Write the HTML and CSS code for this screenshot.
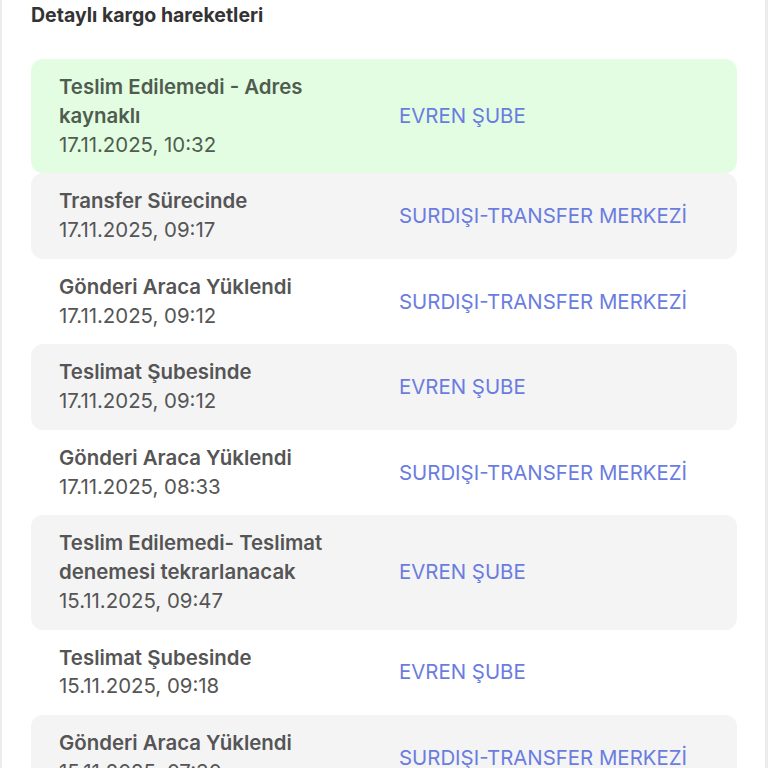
FILE: index.html
```html
<!DOCTYPE html>
<html lang="tr">
<head>
<meta charset="utf-8">
<link rel="stylesheet" href="styles.css">
</head>
<body>
<div class="screen">
  <h2 class="heading">Detaylı kargo hareketleri</h2>
  <div class="list">
    <div class="row green">
      <div class="info"><div class="title">Teslim Edilemedi - Adres kaynaklı</div><div class="date">17.11.2025, 10:32</div></div>
      <div class="loc">EVREN ŞUBE</div>
    </div>
    <div class="row gray">
      <div class="info"><div class="title">Transfer Sürecinde</div><div class="date">17.11.2025, 09:17</div></div>
      <div class="loc">SURDIŞI-TRANSFER MERKEZİ</div>
    </div>
    <div class="row">
      <div class="info"><div class="title">Gönderi Araca Yüklendi</div><div class="date">17.11.2025, 09:12</div></div>
      <div class="loc">SURDIŞI-TRANSFER MERKEZİ</div>
    </div>
    <div class="row gray">
      <div class="info"><div class="title">Teslimat Şubesinde</div><div class="date">17.11.2025, 09:12</div></div>
      <div class="loc">EVREN ŞUBE</div>
    </div>
    <div class="row">
      <div class="info"><div class="title">Gönderi Araca Yüklendi</div><div class="date">17.11.2025, 08:33</div></div>
      <div class="loc">SURDIŞI-TRANSFER MERKEZİ</div>
    </div>
    <div class="row gray">
      <div class="info"><div class="title">Teslim Edilemedi- Teslimat denemesi tekrarlanacak</div><div class="date">15.11.2025, 09:47</div></div>
      <div class="loc">EVREN ŞUBE</div>
    </div>
    <div class="row">
      <div class="info"><div class="title">Teslimat Şubesinde</div><div class="date">15.11.2025, 09:18</div></div>
      <div class="loc">EVREN ŞUBE</div>
    </div>
    <div class="row gray">
      <div class="info"><div class="title">Gönderi Araca Yüklendi</div><div class="date">15.11.2025, 07:30</div></div>
      <div class="loc">SURDIŞI-TRANSFER MERKEZİ</div>
    </div>
  </div>
</div>
</body>
</html>
```
FILE: styles.css
```css
html, body {
  margin: 0;
  padding: 0;
  background: #ffffff;
  height: 768px;
  overflow: hidden;
}
.screen {
  box-sizing: border-box;
  width: 768px;
  height: 768px;
  border-left: 2px solid #ececec;
  border-right: 3px solid #ececec;
  padding: 0 28px 0 29px;
  font-family: Inter, "Noto Sans", sans-serif;
}
.heading {
  margin: 0;
  padding: 3px 0 0 0;
  height: 59px;
  box-sizing: border-box;
  font-size: 19.5px;
  line-height: 24px;
  font-weight: 700;
  color: #333333;
}
.list {
  display: flex;
  flex-direction: column;
}
.row {
  display: flex;
  align-items: center;
  padding: 14px 28px;
  border-radius: 12px;
  background: #ffffff;
}
.row.gray { background: #f4f4f5; }
.row.green { background: #e3fde2; }
.row.green .title,
.row.green .date { color: #4f5c4f; }
.info {
  width: 310px;
  flex: none;
  margin-right: 30px;
}
.title {
  font-size: 20.4px;
  line-height: 28.75px;
  font-weight: 600;
  color: #555555;
}
.date {
  font-size: 20.4px;
  line-height: 28.75px;
  font-weight: 400;
  color: #555555;
}
.loc {
  font-size: 20.4px;
  line-height: 28px;
  color: #6a7ddf;
}
```
